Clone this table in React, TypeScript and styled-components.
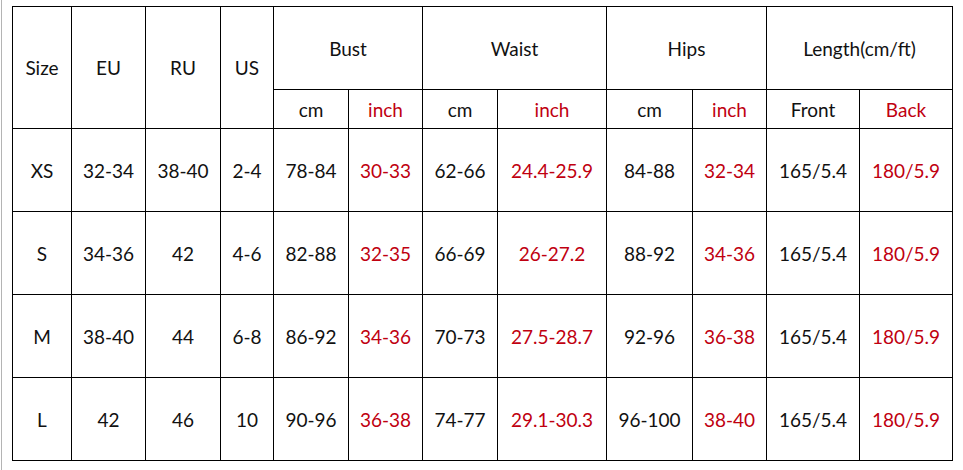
import styled, { createGlobalStyle } from "styled-components";

const GlobalStyle = createGlobalStyle`
  html, body {
    margin: 0;
    padding: 0;
    background: #fff;
  }
  body {
    font-family: Lato, "Open Sans", sans-serif;
  }
`;

const Page = styled.div`
  width: 963px;
  height: 470px;
  box-sizing: border-box;
  margin-left: 1px;
  border-left: 1px solid #b4b4b4;
  padding: 6px 0 0 10px;
`;

const Table = styled.table`
  border-collapse: collapse;
  table-layout: fixed;
  width: 941px;
  font-size: 19px;
  color: #111;
`;

const Cell = styled.td<{ $red?: boolean; $h?: number }>`
  border: 1px solid #000;
  padding: 0;
  text-align: center;
  vertical-align: middle;
  height: ${p => p.$h ?? 82}px;
  color: ${p => (p.$red ? "#c00010" : "#111")};
  white-space: nowrap;
`;

const widths = [59, 74, 75, 53, 75, 74, 75, 109, 86, 74, 93, 93];

const rows = [
  ["XS", "32-34", "38-40", "2-4", "78-84", "30-33", "62-66", "24.4-25.9", "84-88", "32-34", "165/5.4", "180/5.9"],
  ["S", "34-36", "42", "4-6", "82-88", "32-35", "66-69", "26-27.2", "88-92", "34-36", "165/5.4", "180/5.9"],
  ["M", "38-40", "44", "6-8", "86-92", "34-36", "70-73", "27.5-28.7", "92-96", "36-38", "165/5.4", "180/5.9"],
  ["L", "42", "46", "10", "90-96", "36-38", "74-77", "29.1-30.3", "96-100", "38-40", "165/5.4", "180/5.9"],
];

const isRed = (i: number) => i === 5 || i === 7 || i === 9 || i === 11;

export default function App() {
  return (
    <>
      <GlobalStyle />
      <Page>
        <Table>
          <colgroup>
            {widths.map((w, i) => (
              <col key={i} style={{ width: w }} />
            ))}
          </colgroup>
          <thead>
            <tr>
              <Cell as="th" rowSpan={2} style={{ fontWeight: 400 }}>Size</Cell>
              <Cell as="th" rowSpan={2} style={{ fontWeight: 400 }}>EU</Cell>
              <Cell as="th" rowSpan={2} style={{ fontWeight: 400 }}>RU</Cell>
              <Cell as="th" rowSpan={2} style={{ fontWeight: 400 }}>US</Cell>
              <Cell as="th" colSpan={2} $h={82} style={{ fontWeight: 400 }}>Bust</Cell>
              <Cell as="th" colSpan={2} style={{ fontWeight: 400 }}>Waist</Cell>
              <Cell as="th" colSpan={2} style={{ fontWeight: 400 }}>Hips</Cell>
              <Cell as="th" colSpan={2} style={{ fontWeight: 400 }}>Length(cm/ft)</Cell>
            </tr>
            <tr>
              <Cell $h={38}>cm</Cell>
              <Cell $h={38} $red>inch</Cell>
              <Cell $h={38}>cm</Cell>
              <Cell $h={38} $red>inch</Cell>
              <Cell $h={38}>cm</Cell>
              <Cell $h={38} $red>inch</Cell>
              <Cell $h={38}>Front</Cell>
              <Cell $h={38} $red>Back</Cell>
            </tr>
          </thead>
          <tbody>
            {rows.map(r => (
              <tr key={r[0]}>
                {r.map((v, i) => (
                  <Cell key={i} $red={isRed(i)}>{v}</Cell>
                ))}
              </tr>
            ))}
          </tbody>
        </Table>
      </Page>
    </>
  );
}
